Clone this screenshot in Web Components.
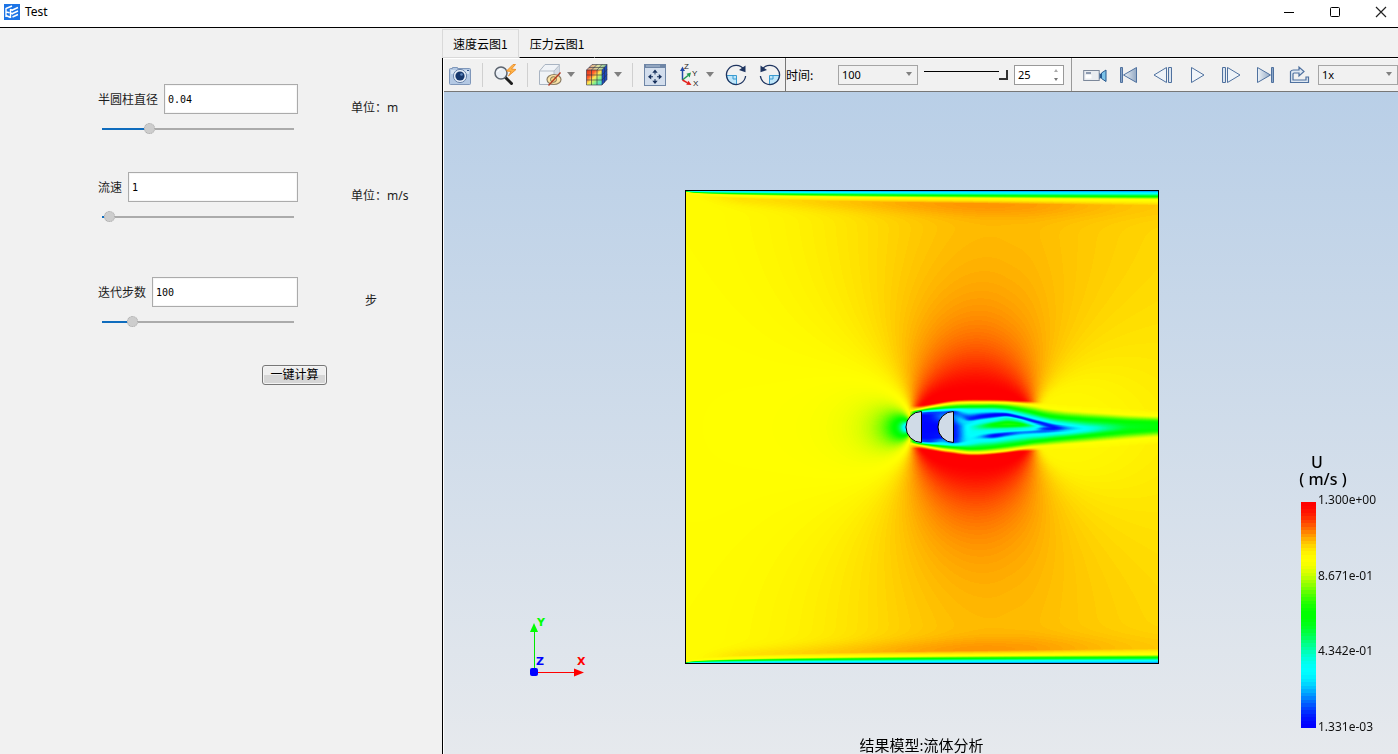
<!DOCTYPE html>
<html lang="zh-CN">
<head>
<meta charset="utf-8">
<title>Test</title>
<style>
  html, body { margin: 0; height: 100%; }
  body { font-family: "Noto Sans", "Noto Sans CJK SC", sans-serif; font-size: 12px; color: #000; background: #f1f1f1; }
</style>
</head>
<body>
<app-window>
  <title-bar slot="title">Test</title-bar>
  <param-panel slot="side">
    <param-field label="半圆柱直径" value="0.04" level="23" unit="单位：m"></param-field>
    <param-field label="流速" value="1" level="1" unit="单位：m/s"></param-field>
    <param-field class="late" label="迭代步数" value="100" level="14" unit="步"></param-field>
  </param-panel>
  <tab-strip slot="tabs"></tab-strip>
  <result-toolbar slot="tools"></result-toolbar>
  <result-view slot="view"></result-view>
</app-window>

<script>
const define = (name, html, setup) => {
  const template = document.createElement('template');
  template.innerHTML = html;
  customElements.define(name, class extends HTMLElement {
    connectedCallback() {
      if (this.shadowRoot) return;
      this.attachShadow({ mode: 'open' }).append(template.content.cloneNode(true));
      if (setup) setup(this, this.shadowRoot);
    }
  });
};

/* ---------- icons ---------- */
const navy = '#1f3560';
const steel = '#4f719f';
const ICONS = {
  logo: `<rect width="16" height="16" fill="#1c74e6"/><g fill="none" stroke="#fff" stroke-width="1.4">
    <path d="M2 4.5 8 2M2 4v9M2 8l3.500.8M2 11.500l4.500 2M6.500 5v9M8.500 6 14 3.500M8.500 9.500 14 7M8.500 13 14 10.500M6.500 5.500 9 6.500M6.500 9l2.500 1"/></g>`,
  min: `<path d="M7 12.500h10" stroke="#000"/>`,
  max: `<rect x="7.500" y="7.500" width="9" height="9" rx="1" fill="none" stroke="#000"/>`,
  close: `<path d="M7 7l10 10M17 7 7 17" stroke="#222" stroke-width="1.200"/>`,
  camera: `<path d="M2.500 5.500h2v-1h5v1h12q1 0 1 1v14q0 1-1 1h-19q-1 0-1-1v-14q0-1 1-1z" fill="#b4c9e4" stroke="#7f97ba"/>
    <path d="M3 7h18v4H3z" fill="#d7e4f3"/><circle cx="12" cy="13" r="6.600" fill="#e6eef8" stroke="#6a84ab"/>
    <circle cx="12" cy="13" r="4.600" fill="#17386d"/><circle cx="13.500" cy="11.500" r="1.300" fill="#5f86bd"/><path d="M19 7.500h2" stroke="#36588c"/>`,
  probe: `<path d="M12 14l6.500 6.500" stroke="#1e1e1e" stroke-width="3" stroke-linecap="round"/>
    <circle cx="8" cy="10" r="6" fill="#e9eef5" stroke="#5d6570" stroke-width="1.500"/><path d="M4.500 9q1-3 4-3" fill="none" stroke="#fff"/>
    <path d="M20 1.500 13.500 8l4.500.5-2.500 4.500L23 6.500 18.500 6l4-4.500z" fill="#ffb54a" stroke="#e8841a" stroke-width=".8"/>`,
  hide: `<path d="M1.500 8 7 1.500h14.500V14L16 21.500H1.500z" fill="#f0f3f7" stroke="#a9b4c2"/>
    <path d="M16 8l5.500-6V14L16 21.500z" fill="#d3dae3"/><path d="M1.500 8H16v13.500M16 8l5.500-6" fill="none" stroke="#b4bdc9"/>
    <ellipse cx="16" cy="16.500" rx="7" ry="5" fill="#fbe3a6" stroke="#8d7f66" stroke-width="1.200"/>
    <ellipse cx="15.500" cy="16.500" rx="3" ry="2.800" fill="#f3cf80" stroke="#7d7258"/><path d="M22.500 9.500 10.500 22.500" stroke="#b23a22" stroke-width="1.300"/>`,
  mesh: `<defs><linearGradient id="mf" x1="0" y1="0" x2="1" y2="1"><stop offset="0" stop-color="#d83018"/><stop offset=".3" stop-color="#ff5a2a"/><stop offset=".5" stop-color="#ffe850"/><stop offset=".72" stop-color="#7cf090"/><stop offset="1" stop-color="#38c8f8"/></linearGradient>
    <linearGradient id="mt" x1="0" x2="1"><stop offset="0" stop-color="#e89078"/><stop offset=".6" stop-color="#d8e0a0"/><stop offset="1" stop-color="#70b890"/></linearGradient></defs>
    <path d="M1.500 7 7 1.500h15L17 7z" fill="url(#mt)"/><path d="M1.500 7H17v15H1.500z" fill="url(#mf)"/><path d="M17 7l5-5.500v15L17 22z" fill="#1d4cc0"/>
    <path d="M1.500 7 7 1.500h15v15L17 22H1.500zM1.500 7H17v15M17 7l5-5.500M6.500 7v15M12 7v15M1.500 12H17l5-5.500M1.500 17H17l5-5.500M6.500 7 12 1.500M12 7l5-5.500M4 4.500h15.500v15" fill="none" stroke="#2c3045" stroke-width=".6"/>`,
  fit: `<rect x="1.500" y="1.500" width="21" height="21" fill="#d3deed" stroke="#6f86a6"/><path d="M1 1h22v4H1z" fill="#6f86a6"/><path d="M3 3h14" stroke="#b5c4d8"/>
    <g fill="#17305c"><path d="M12 6.500l2.700 3.200H9.300zM12 21l2.700-3.200H9.300zM5 13.700 8.200 11v5.400zM19 13.700 15.800 11v5.400z"/><path d="M11.500 9.500h1v2h-1zM11.500 16h1v2h-1zM8 13.200h2v1H8zM14 13.200h2v1h-2z"/></g>`,
  axes: `<path d="M5.500 17V7" stroke="#2148a8" stroke-width="1.500"/><path d="M5.500 3.500 8 8H3z" fill="#2148a8"/>
    <path d="M5.500 17l5.500-4.500" stroke="#239a52" stroke-width="1.500"/><path d="M14 9.500l-1.300 5-3.200-3.700z" fill="#239a52"/>
    <path d="M5.500 17l5 2.800" stroke="#e3201b" stroke-width="1.500"/><path d="M14.500 22l-5.300-.300 2.200-4z" fill="#e3201b"/>
    <g font-family="Liberation Sans, sans-serif" font-size="8" fill="#222"><text x="7" y="6">Z</text><text x="15" y="13">Y</text><text x="16" y="23">X</text></g>`,
  cw: `<path d="M2.500 12.500H12.500V21.500A9.500 9.500 0 0 1 2.500 12.500z" fill="#bfe6fa" stroke="#3a9bd0"/><path d="M9 12.500v3.500h3.500" fill="none" stroke="#3a9bd0"/>
    <path d="M20 6.500A9.600 9.600 0 1 0 21.600 13" fill="none" stroke="${navy}" stroke-width="1.300"/><path d="M21.500 2.500v6.700l-6.500-2.200z" fill="${navy}"/>`,
  ccw: `<path d="M21.500 12.500H11.500V21.500A9.500 9.500 0 0 0 21.500 12.500z" fill="#bfe6fa" stroke="#3a9bd0"/><path d="M15 12.500v3.500h-3.500" fill="none" stroke="#3a9bd0"/>
    <path d="M4 6.500A9.600 9.600 0 1 1 2.400 13" fill="none" stroke="${navy}" stroke-width="1.300"/><path d="M2.500 2.500v6.700L9 7z" fill="${navy}"/>`,
  video: `<rect x=".7" y="7.500" width="15.500" height="10" fill="#e9ecf0" stroke="#7c889a"/><path d="M2.500 12h6v3.500h-6z" fill="#fff"/><path d="M3 10h5" stroke="#5b6f8d" stroke-width="1.300"/>
    <path d="M16.500 10l2 1.500v3l-2 1.500z" fill="#27598f"/><path d="M18.500 10l4.500-3v11.500l-4.500-3z" fill="#7cc3e8" stroke="#27598f"/>`,
  first: `<path d="M3.500 4.500h2v15h-2z" fill="#8ba6c7" stroke="${steel}"/><path d="M19.500 4.500v15L6.500 12z" fill="url(#g1)" stroke="${steel}"/>`,
  back: `<path d="M15.500 4.500v15L3 12z" fill="#eef3f8" stroke="${steel}"/><path d="M17.500 4.500h3v15h-3z" fill="#dbe5f0" stroke="${steel}"/>`,
  play: `<path d="M6.500 4.500 19 12 6.500 19.500z" fill="#f1f5f9" stroke="${steel}"/>`,
  next: `<path d="M8.500 4.500 21 12 8.500 19.500z" fill="#eef3f8" stroke="${steel}"/><path d="M3.500 4.500h3v15h-3z" fill="#dbe5f0" stroke="${steel}"/>`,
  last: `<path d="M4.500 4.500 17.500 12l-13 7.500z" fill="url(#g1)" stroke="${steel}"/><path d="M18.500 4.500h2v15h-2z" fill="#8ba6c7" stroke="${steel}"/>`,
  loop: `<path d="M3.500 8.500v11h18v-5.500h-2.500v3H6v-6q0-1 1-1h5V13l5-4.500-5-4.500v3H6.500q-2 0-3 1.500z" fill="#dfe8f2" stroke="${steel}" stroke-width="1.200"/>`
};
const defs = `<defs><linearGradient id="g1"><stop offset="0" stop-color="#eef3f8"/><stop offset="1" stop-color="#93a9c4"/></linearGradient></defs>`;

define('app-icon', `<style>:host{display:block;line-height:0} svg{display:block}</style>`, (el, root) => {
  const size = el.getAttribute('name') === 'logo' ? 16 : 24;
  root.innerHTML += `<svg width="${size}" height="${size}" viewBox="0 0 ${size} ${size}" fill="none" aria-hidden="true">${defs}${ICONS[el.getAttribute('name')]}</svg>`;
});

define('tool-button', `<style>
  :host{display:block}
  button{display:flex;align-items:center;gap:5px;padding:0;border:0;background:none}
  i{border:4px solid transparent;border-top:5px solid #808080;border-bottom:0}
</style><button type="button"></button>`, (el, root) => {
  const button = root.querySelector('button');
  button.setAttribute('aria-label', el.getAttribute('label'));
  const icon = document.createElement('app-icon');
  icon.setAttribute('name', el.getAttribute('icon'));
  button.append(icon);
  if (el.hasAttribute('menu')) button.append(document.createElement('i'));
});

/* ---------- window frame ---------- */
define('title-bar', `<style>
  :host{display:flex;align-items:center;height:27px;padding:0 5px 4px 4px;box-sizing:border-box;background:#fff;gap:5px}
  .name{flex:1}
  nav{display:flex;gap:22px}
</style>
<app-icon name="logo"></app-icon><span class="name"><slot></slot></span>
<nav aria-label="window">
  <tool-button icon="min" label="最小化"></tool-button>
  <tool-button icon="max" label="最大化"></tool-button>
  <tool-button icon="close" label="关闭"></tool-button>
</nav>`);

define('app-window', `<style>
  :host{display:flex;flex-direction:column;min-height:100vh;background:#f1f1f1}
  .body{flex:1;display:grid;grid-template-columns:442px minmax(0,1fr);border-top:1px solid #000}
  .main{display:flex;flex-direction:column;min-width:0}
  .result{flex:1;display:flex;flex-direction:column;border-left:1px solid #000;box-shadow:inset 1px 0 #fff;padding-left:1px;min-width:0}
</style>
<slot name="title"></slot>
<div class="body">
  <slot name="side"></slot>
  <div class="main"><slot name="tabs"></slot>
    <div class="result"><slot name="tools"></slot><slot name="view"></slot></div>
  </div>
</div>`);

/* ---------- parameters ---------- */
define('param-panel', `<style>
  :host{display:block;padding:56px 0 0 98px}
  form{display:flex;flex-direction:column;align-items:flex-start}
  ::slotted(*){margin-bottom:35px}
  ::slotted(.late){margin-top:17px}
  button{margin-left:164px;width:65px;height:20px;padding:0;border:1px solid #777;border-radius:3px;font:inherit;line-height:18px;
    background:linear-gradient(#efefef 50%,#d6d6d6 50%);box-shadow:inset 0 0 0 1px #f4f4f4}
</style><form><slot></slot><button type="button">一键计算</button></form>`);

define('param-field', `<style>
  :host{display:grid;grid-template-columns:200px auto;column-gap:53px;color:#1c1c1c}
  .row{display:flex;align-items:center;gap:6px}
  label{white-space:nowrap;line-height:18px;padding-top:2px}
  .text{flex:1;min-width:0;height:30px;box-sizing:border-box;padding:0 3px;border:1px solid #ababab;background:#fff;font:10px "DejaVu Sans Mono",monospace;color:#000;box-shadow:inset 0 0 0 1px #f6f6f6}
  .range{appearance:none;display:block;width:192px;height:16px;margin:7px 4px 0;background:none}
  .range::-webkit-slider-runnable-track{height:2px;background:linear-gradient(90deg,#0f6cbd var(--level),#ababab var(--level))}
  .range::-webkit-slider-thumb{appearance:none;width:11px;height:11px;margin-top:-5px;border-radius:50%;border:1px dotted #aaa;box-sizing:border-box;background:#cdcdcd}
  .unit{height:46px;min-width:40px;display:grid;place-items:center}
</style>
<div><div class="row"><label for="v"></label><input id="v" class="text" type="text"></div><input class="range" type="range" min="0" max="100"></div>
<span class="unit"></span>`, (el, root) => {
  const get = name => el.getAttribute(name);
  root.querySelector('label').textContent = get('label');
  root.querySelector('.text').value = get('value');
  root.querySelector('.unit').textContent = get('unit');
  const range = root.querySelector('.range');
  range.value = get('level');
  range.setAttribute('aria-label', get('label'));
  const paint = () => range.style.setProperty('--level', range.value + '%');
  range.addEventListener('input', paint);
  paint();
});

/* ---------- tabs and toolbar ---------- */
define('tab-strip', `<style>
  :host{display:flex;height:30px;padding-top:1px;box-sizing:border-box;font-family:"Noto Sans CJK SC",sans-serif}
  button{font:inherit;color:#000;padding:0 10px;border:1px solid transparent;border-bottom-color:#000;background:none}
  button[aria-selected=true]{border-color:#d9d9d9}
  .rest{flex:1;border-bottom:1px solid #000}
  [role=tablist]{display:flex}
</style><div role="tablist"><button type="button" role="tab" aria-selected="true">速度云图1</button><button type="button" role="tab" aria-selected="false">压力云图1</button></div><div class="rest"></div>`);

define('drop-down', `<style>
  :host{display:block;position:relative}
  select{appearance:none;display:block;width:100%;height:20px;padding:0 3px;border:1px solid #a5a5a5;border-radius:0;background:#f1f1f1;font:11px "Noto Sans",sans-serif;color:#000}
  i{position:absolute;right:6px;top:7px;border:3px solid transparent;border-top:4px solid #808080;border-bottom:0;pointer-events:none}
</style><select><option></option></select><i></i>`, (el, root) => {
  root.querySelector('option').textContent = el.getAttribute('value');
  root.querySelector('select').setAttribute('aria-label', el.getAttribute('label'));
});

define('result-toolbar', `<style>
  :host{display:flex;height:34px;box-sizing:border-box;border-bottom:1px solid #777;box-shadow:inset 0 1px #fff;font-family:"Noto Sans CJK SC",sans-serif;overflow:hidden}
  .group{display:flex;align-items:center;gap:10px}
  .view{padding:0 3px 0 4px}
  .sep{width:1px;height:24px;background:#d0d0d0}
  .time{border-left:1px solid #777;gap:6px;padding-right:7px}
  .time label{width:46px;white-space:nowrap}
  .time drop-down{width:80px}
  .time .slide{width:84px;height:10px;margin:0;appearance:none;background:none}
  .slide::-webkit-slider-runnable-track{height:10px;background:linear-gradient(transparent 1px,#000 1px,#000 2px,transparent 2px)}
  .slide::-webkit-slider-thumb{appearance:none;width:9px;height:10px;box-sizing:border-box;background:#f4f4f4;border:solid #333;border-width:0 2px 2px 0}
  .spin{position:relative;width:50px}
  .spin input{appearance:textfield;display:block;width:100%;height:20px;box-sizing:border-box;padding:0 3px;border:1px solid #999;background:#fff;font:11px "Noto Sans",sans-serif}
  .spin input::-webkit-inner-spin-button{display:none}
  .spin i{position:absolute;right:6px;border:2px solid transparent}
  .spin .up{top:4px;border-bottom:3px solid #aaa;border-top:0}
  .spin .down{bottom:4px;border-top:3px solid #777;border-bottom:0}
  .play{flex:1;border-left:1px solid #999;padding-left:11px;gap:7px}
  .play drop-down{flex:1;min-width:60px}
</style>
<div class="group view">
  <tool-button icon="camera" label="截图"></tool-button><span class="sep"></span>
  <tool-button icon="probe" label="探测"></tool-button><span class="sep"></span>
  <tool-button icon="hide" label="显示" menu></tool-button>
  <tool-button icon="mesh" label="网格" menu></tool-button><span class="sep"></span>
  <tool-button icon="fit" label="适应窗口"></tool-button>
  <tool-button icon="axes" label="视角" menu></tool-button>
  <tool-button icon="cw" label="顺时针旋转"></tool-button>
  <tool-button icon="ccw" label="逆时针旋转"></tool-button>
</div>
<div class="group time">
  <label for="frame">时间:</label><drop-down value="100" label="时间"></drop-down>
  <input class="slide" type="range" min="0" max="25" value="25" aria-label="帧">
  <span class="spin"><input id="frame" type="number" value="25"><i class="up"></i><i class="down"></i></span>
</div>
<div class="group play">
  <div class="group">
    <tool-button icon="video" label="录制"></tool-button>
    <tool-button icon="first" label="第一帧"></tool-button>
    <tool-button icon="back" label="上一帧"></tool-button>
    <tool-button icon="play" label="播放"></tool-button>
    <tool-button icon="next" label="下一帧"></tool-button>
    <tool-button icon="last" label="最后一帧"></tool-button>
    <tool-button icon="loop" label="循环"></tool-button>
  </div>
  <drop-down value="1x" label="速度"></drop-down>
</div>`);

/* ---------- velocity field ---------- */
const clamp = (v, a, b) => Math.min(b, Math.max(a, v));
const mix = (a, b, t) => a + (b - a) * t;
const smooth = (a, b, v) => { const t = clamp((v - a) / (b - a), 0, 1); return t * t * (3 - 2 * t); };

/* rainbow scale: 0 blue, 1/4 cyan, 1/2 green, 3/4 yellow, 1 red, with flat spots at each */
const rainbow = v => {
  const s = clamp(v, 0, 1) * 4, k = Math.min(3, Math.floor(s)), t = s - k;
  const f = Math.round(255 * mix(t, t * t * (3 - 2 * t), .8));
  return [[0, f, 255], [0, 255, 255 - f], [f, 255, 0], [255, 255 - f, 0]][k];
};

/* wake cross-sections, in thirds of a unit: x, the y of each feature, the speed at features 2..10 */
const WAKE = [
  [235, [196,207,211,214,218,225,260,290,303,306,309,314,324], [.5,.25,.1,.02,.02,.02,.1,.25,.5]],
  [265, [189,200,206,211,217,227,260,290,304,309,313,320,332], [.5,.25,.06,.02,.01,.02,.06,.25,.5]],
  [310, [180,192,202,208,216,228,260,290,299,311,318,328,340], [.5,.25,.1,.14,.01,.05,.16,.25,.5]],
  [340, [176,188,200,207,213,225,260,290,305,313,321,331,343], [.5,.25,.05,.1,.03,.02,.03,.25,.5]],
  [357, [175,187,199,207,218,238,260,285,302,312,322,334,346], [.5,.25,.13,.2,.1,.1,.12,.25,.5]],
  [385, [174,186,198,208,237,246,260,280,298,310,325,337,348], [.5,.27,.05,.2,.28,.27,.25,.28,.5]],
  [420, [174,186,198,208,229,243,258,275,289,303,324,337,348], [.5,.27,.02,.27,.38,.27,.17,.28,.5]],
  [460, [174,186,197,209,224,238,253,272,286,300,320,334,345], [.5,.27,0,.28,.5,.27,0,.27,.5]],
  [500, [175,187,200,212,222,232,251,268,280,294,315,330,341], [.5,.27,0,.33,.55,.31,.06,.27,.5]],
  [540, [179,190,207,222,231,240,252,266,276,289,310,324,335], [.5,.27,0,.34,.52,.3,.13,.27,.5]],
  [580, [183,194,216,232,243,249,256,266,274,285,303,320,331], [.5,.27,0,.2,.33,.26,.12,.27,.5]],
  [610, [187,200,224,239,250,253,258,264,272,284,300,318,329], [.5,.27,.02,.05,.14,.05,.1,.27,.5]],
  [640, [191,204,229,246,257,260,263,267,272,280,296,316,327], [.5,.27,.05,0,0,.04,.13,.27,.5]],
  [680, [195,209,233,252,258,261,264,267,271,277,292,313,325], [.5,.27,.18,.15,.14,.16,.2,.27,.5]],
  [740, [198,213,237,256,259,262,264,267,269,273,286,309,324], [.5,.32,.29,.27,.27,.27,.29,.32,.5]],
  [800, [200,217,240,253,257,260,262,264,267,270,280,304,322], [.5,.4,.38,.37,.37,.37,.38,.4,.5]],
  [860, [204,221,242,250,254,257,259,262,265,268,276,299,318], [.52,.47,.46,.45,.45,.45,.46,.47,.52]],
  [960, [208,226,242,248,252,255,257,260,263,266,272,291,312], [.55,.5,.49,.49,.49,.49,.49,.5,.55]]
];

const outer = (x, y) => {
  /* a source and a sink in a uniform stream, with images behind both walls */
  let u = .99, v = 0;
  for (const cy of [237, -237, 711]) {
    for (const [cx, m] of [[232, 10.6], [344, -10.6]]) {
      const dx = x - cx, dy = y - cy, r = Math.max(dx * dx + dy * dy, 30);
      u += m * dx / r; v += m * dy / r;
    }
  }
  const s = Math.hypot(u, v) / 1.3 + .038 * smooth(0, 340, x);
  /* the stream does not slow down again behind the body */
  const floor = .765 + .00007 * Math.abs(y - 237);
  const d = s - floor;
  return mix(s, floor + (d + Math.sqrt(d * d + .0004)) / 2, smooth(320, 350, x));
};

const wake = (x, y, base) => {
  const X = (x - 155) * 3, Y = (y - 150) * 3;
  if (X < 205) return base;
  let k = 0;
  while (k < WAKE.length - 2 && X > WAKE[k + 1][0]) k++;
  const a = WAKE[k], b = WAKE[k + 1], t = clamp((X - a[0]) / (b[0] - a[0]), 0, 1);
  const ys = a[1].map((q, i) => mix(q, b[1][i], t));
  if (Y <= ys[0] || Y >= ys[12]) return base;
  const vs = [base, .75, ...a[2].map((q, i) => mix(q, b[2][i], t)), .75, base];
  let i = 0;
  while (i < 11 && Y > ys[i + 1]) i++;
  let f = (Y - ys[i]) / (ys[i + 1] - ys[i]);
  if (i > 2 && i < 9) f = f * f * (3 - 2 * f);
  return mix(base, mix(vs[i], vs[i + 1], f), smooth(205, 235, X));
};

const LAYER = [[0, .1], [3, .27], [6, .5], [9, .74]];
const wall = (x, depth, base) => {
  const d = depth / Math.pow(clamp(x, 1, 473) / 473, .3);
  base += .03 * Math.exp(-Math.pow((d - 16) / 14, 2)) * smooth(0, 60, x) * (1 - .6 * smooth(280, 473, x));
  if (d > 15) return base;
  for (let i = 0; i < 3; i++) if (d < LAYER[i + 1][0]) return mix(LAYER[i][1], LAYER[i + 1][1], (d - LAYER[i][0]) / 3);
  return mix(.74, base, (d - 9) / 6);
};

define('flow-plot', `<style>:host{display:block} canvas{display:block;width:100%;height:100%}</style>
<canvas width="474" height="474" role="img" aria-label="速度云图"></canvas>`, (el, root) => {
  const N = 474;
  const c = root.querySelector('canvas').getContext('2d');
  const img = c.createImageData(N, N);
  let field = new Float32Array(N * N);
  for (let y = 0; y < N; y++) for (let x = 0; x < N; x++)
    field[y * N + x] = wall(x, Math.min(y, N - 1 - y), wake(x, y, outer(x, y)));
  /* diffuse the wake a little along the stream */
  for (let pass = 0; pass < 2; pass++) {
    const next = field.slice();
    for (let y = 205; y < 270; y++) for (let x = 225; x < N; x++) {
      let sum = 0;
      for (let k = -3; k <= 3; k++) sum += field[y * N + Math.min(N - 1, x + k)];
      next[y * N + x] = sum / 7;
    }
    field = next;
  }
  field.forEach((v, i) => img.data.set([...rainbow(Math.round(v * 256) / 256), 255], i * 4));
  c.putImageData(img, 0, 0);
  c.strokeStyle = '#000';
  c.fillStyle = '#d0dbe7';
  for (const x of [236.5, 268.5]) {
    c.beginPath();
    c.arc(x, 237, 15.5, Math.PI / 2, Math.PI * 1.5);
    c.closePath();
    c.fill();
    c.stroke();
  }
  c.strokeRect(.5, .5, N - 1, N - 1);
});

define('axis-triad', `<style>:host{display:block} svg{display:block}</style>
<svg width="60" height="64" viewBox="0 0 60 64" role="img" aria-label="坐标轴">
  <path d="M5.500 58V16" stroke="#00e800"/><path d="M5 9l4 9H1z" fill="#0f0"/>
  <path d="M5 58.500h42" stroke="#f00"/><path d="M55 58.500l-10-4v8z" fill="#f00"/>
  <rect x="1" y="54" width="8" height="8" rx="2" fill="#00f"/>
  <g font-family="DejaVu Sans, sans-serif" font-weight="bold" font-size="11"><text x="8" y="12" fill="#0f0">Y</text><text x="7" y="51" fill="#00f">Z</text><text x="48" y="51" fill="#f00">X</text></g>
</svg>`);

define('color-legend', `<style>
  :host{display:block;width:100px}
  h2{margin:0 0 3px;width:38px;font-size:16px;font-weight:500;line-height:17px;text-align:center}
  h2 span{display:block;width:50px}
  .scale{display:flex;gap:2px;height:245px;padding-left:3px}
  .bar{width:15px;margin:11px 0 8px;display:flex;flex-direction:column}
  .bar i{flex:1}
  ol{list-style:none;margin:0;padding:0;display:flex;flex-direction:column;justify-content:space-between;line-height:18px;color:#111}
</style>
<h2>U<span>( m/s )</span></h2>
<div class="scale"><div class="bar"></div><ol><li>1.300e+00</li><li>8.671e-01</li><li>4.342e-01</li><li>1.331e-03</li></ol></div>`, (el, root) => {
  const bar = root.querySelector('.bar');
  for (let i = 0; i < 64; i++) {
    const step = document.createElement('i');
    step.style.background = `rgb(${rainbow(1 - i / 63)})`;
    bar.append(step);
  }
});

define('result-view', `<style>
  :host{flex:1;display:grid;grid-template-columns:1fr auto 1fr;grid-template-rows:98px auto 1fr;padding-left:1px;background:linear-gradient(#b9cfe7,#e6e9ed)}
  flow-plot{grid-area:2/2;height:calc(100vh - 280px);aspect-ratio:1;min-height:300px}
  p{grid-area:3/2;align-self:end;justify-self:center;margin:0;font-size:15px;line-height:18px}
  axis-triad{grid-area:1/1/4/2;place-self:end start;margin:0 0 76px 84px}
  color-legend{grid-area:1/3/4/4;place-self:end;margin-bottom:18px}
</style>
<axis-triad></axis-triad><flow-plot></flow-plot><p>结果模型:流体分析</p><color-legend></color-legend>`);
</script>
</body>
</html>
